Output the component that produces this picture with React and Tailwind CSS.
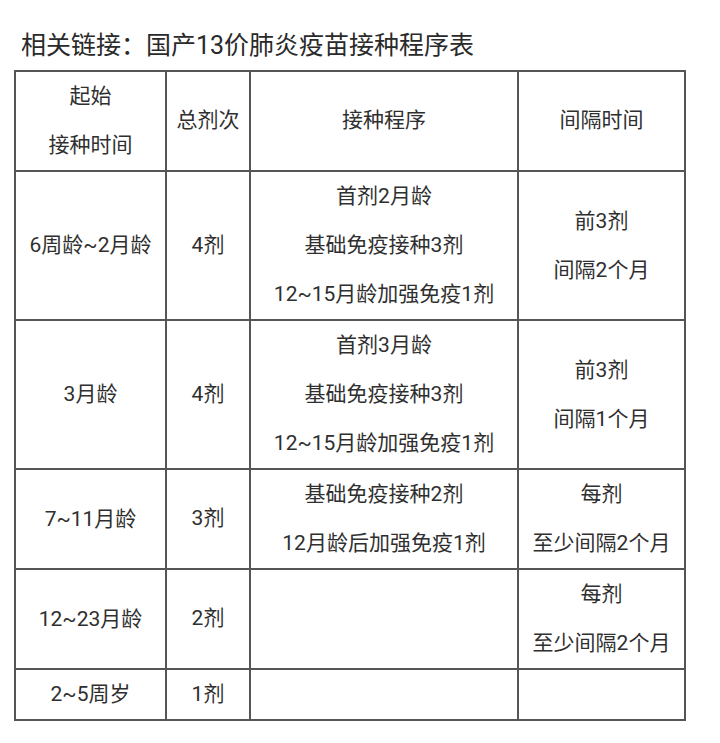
const rows = [
    { h: 'h-[148px]', start: ['6周龄~2月龄'], total: '4剂', plan: ['首剂2月龄', '基础免疫接种3剂', '12~15月龄加强免疫1剂'], gap: ['前3剂', '间隔2个月'] },
    { h: 'h-[146px]', start: ['3月龄'], total: '4剂', plan: ['首剂3月龄', '基础免疫接种3剂', '12~15月龄加强免疫1剂'], gap: ['前3剂', '间隔1个月'] },
    { h: 'h-[99px]', start: ['7~11月龄'], total: '3剂', plan: ['基础免疫接种2剂', '12月龄后加强免疫1剂'], gap: ['每剂', '至少间隔2个月'] },
    { h: 'h-[98px]', start: ['12~23月龄'], total: '2剂', plan: [], gap: ['每剂', '至少间隔2个月'] },
    { h: 'h-[48px]', start: ['2~5周岁'], total: '1剂', plan: [], gap: [] },
];

function Lines({ items }) {
    return items.map((t, i) => (
        <div key={i} className="leading-[49px]">
            {t}
        </div>
    ));
}

const cell = 'border-2 border-[#555] text-center align-middle p-0';

export default function App() {
    return (
        <div
            className="min-h-[743px] w-[720px] bg-white text-[#2f2f2f]"
            style={{ fontFamily: 'Roboto, "Noto Sans CJK SC", "Noto Sans", sans-serif' }}
        >
            <div className="pl-[21px] pt-[28px] text-[25px] leading-[36px] text-[#2a2a2a]">相关链接：国产13价肺炎疫苗接种程序表</div>
            <table className="ml-[14px] mt-[6px] border-collapse text-[21px]">
                <colgroup>
                    <col className="w-[151px]" />
                    <col className="w-[84px]" />
                    <col className="w-[268px]" />
                    <col className="w-[167px]" />
                </colgroup>
                <thead>
                    <tr className="h-[99px]">
                        <th className={`${cell} font-normal`}>
                            <Lines items={['起始', '接种时间']} />
                        </th>
                        <th className={`${cell} font-normal`}>总剂次</th>
                        <th className={`${cell} font-normal`}>接种程序</th>
                        <th className={`${cell} font-normal`}>间隔时间</th>
                    </tr>
                </thead>
                <tbody>
                    {rows.map((r, i) => (
                        <tr key={i} className={r.h}>
                            <td className={cell}>
                                <Lines items={r.start} />
                            </td>
                            <td className={cell}>{r.total}</td>
                            <td className={cell}>
                                <Lines items={r.plan} />
                            </td>
                            <td className={cell}>
                                <Lines items={r.gap} />
                            </td>
                        </tr>
                    ))}
                </tbody>
            </table>
        </div>
    );
}
